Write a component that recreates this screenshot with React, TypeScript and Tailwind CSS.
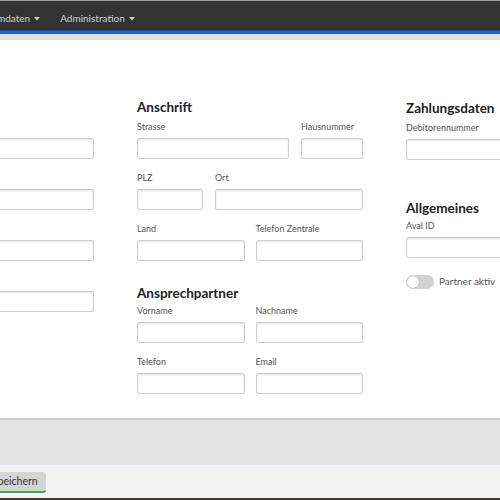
import React from "react";

const font = { fontFamily: 'Lato, "Open Sans", Arial, sans-serif' };

function Caret() {
  return (
    <svg width="6" height="4" viewBox="0 0 6 4" className="ml-[4px] mt-[1px]">
      <path d="M0 0 H6 L3 3.5 Z" fill="currentColor" />
    </svg>
  );
}

function Input({ className = "" }: { className?: string }) {
  return (
    <div
      className={
        "h-[21px] rounded-[2px] border border-[#cfcfcf] bg-white shadow-[inset_0_1px_2px_rgba(0,0,0,0.12)] " +
        className
      }
    />
  );
}

function Field({ label, className = "" }: { label: string; className?: string }) {
  return (
    <div className={"flex min-w-0 flex-col " + className}>
      <div className="mb-[4px] h-[13px] whitespace-nowrap text-[9px] leading-[11px] text-[#555]">{label}</div>
      <Input />
    </div>
  );
}

function Heading({ children, className = "" }: { children: React.ReactNode; className?: string }) {
  return (
    <div className={"h-[20px] whitespace-nowrap text-[13.5px] font-bold leading-[20px] text-[#222] " + className}>
      {children}
    </div>
  );
}

export default function App() {
  return (
    <div className="flex h-[500px] w-[500px] flex-col overflow-hidden bg-white" style={font}>
      <div className="h-[1px] bg-[#9c9c9c]" />
      <nav className="flex h-[29px] items-center bg-[#333333] pt-[5px] text-[10px] text-[#cfcfcf]">
        <div className="ml-[-25px] flex shrink-0 items-center">
          Stammdaten
          <Caret />
        </div>
        <div className="ml-[20px] flex shrink-0 items-center">
          Administration
          <Caret />
        </div>
      </nav>
      <div className="h-[1px] bg-[#1b4f9e]" />
      <div className="h-[3px] bg-[#1f66cc]" />
      <div className="h-[6px] bg-[#e2e2e2]" />
      <main className="h-[378px] pt-[57px]">
        <div className="ml-[-132px] flex gap-[43px]">
          <div className="flex w-[226px] shrink-0 flex-col">
            <Heading className="mb-[4px]">Partner</Heading>
            <Field label="Name" />
            <Field label="Name 2" className="mt-[13px]" />
            <Field label="Kurzname" className="mt-[13px]" />
            <Field label="Partnernummer" className="mt-[13px]" />
          </div>
          <div className="flex w-[226px] shrink-0 flex-col">
            <Heading className="mb-[4px]">Anschrift</Heading>
            <div className="flex gap-[12px]">
              <Field label="Strasse" className="flex-1" />
              <Field label="Hausnummer" className="w-[62px] shrink-0" />
            </div>
            <div className="mt-[13px] flex gap-[12px]">
              <Field label="PLZ" className="w-[66px] shrink-0" />
              <Field label="Ort" className="flex-1" />
            </div>
            <div className="mt-[13px] grid grid-cols-2 gap-[11px]">
              <Field label="Land" />
              <Field label="Telefon Zentrale" />
            </div>
            <Heading className="mb-[2px] mt-[22px]">Ansprechpartner</Heading>
            <div className="grid grid-cols-2 gap-[11px]">
              <Field label="Vorname" />
              <Field label="Nachname" />
            </div>
            <div className="mt-[13px] grid grid-cols-2 gap-[11px]">
              <Field label="Telefon" />
              <Field label="Email" />
            </div>
          </div>
          <div className="flex w-[226px] shrink-0 flex-col">
            <Heading className="mb-[4px] mt-[1px]">Zahlungsdaten</Heading>
            <Field label="Debitorennummer" />
            <Heading className="mb-[2px] mt-[38px]">Allgemeines</Heading>
            <Field label="Aval ID" />
            <div className="mt-[16px] flex items-center">
              <div className="flex h-[14px] w-[28px] items-center rounded-full bg-[#d2d2d2] p-[1px]">
                <div className="h-[12px] w-[12px] rounded-full bg-white shadow-[0_0_1px_rgba(0,0,0,0.3)]" />
              </div>
              <span className="ml-[5px] text-[10px] text-[#555]">Partner aktiv</span>
            </div>
          </div>
        </div>
      </main>
      <div className="h-[2px] bg-[#c9c9c9]" />
      <div className="h-[44px] bg-[#e3e3e3]" />
      <div className="h-[1px] bg-[#d9e5f3]" />
      <footer className="h-[33px] bg-[#f3f3f3] pt-[7px]">
        <button className="ml-[-18px] flex h-[21px] items-center rounded-[3px] border-b-2 border-[#3fa34d] bg-[#d5d5d5] pl-[10px] pr-[8px] text-[10.5px] text-[#333]">
          Speichern
        </button>
      </footer>
      <div className="h-[2px] bg-[#3d3a36]" />
    </div>
  );
}
